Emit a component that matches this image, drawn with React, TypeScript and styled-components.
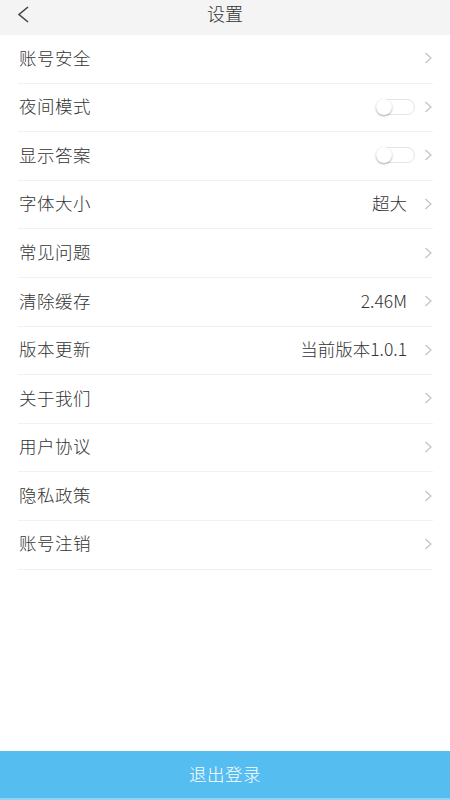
import React from "react";
import styled, { createGlobalStyle } from "styled-components";

const Global = createGlobalStyle`
  html, body { margin: 0; padding: 0; background: #fff; }
  body { font-family: "Noto Sans CJK SC", "Noto Sans", sans-serif; }
  #root { height: 800px; }
`;

const Page = styled.div`
  width: 450px;
  height: 800px;
  display: flex;
  flex-direction: column;
  background: #fff;
`;

const Header = styled.div`
  height: 35px;
  flex: none;
  background: #f4f4f4;
  display: grid;
  grid-template-columns: 60px 1fr 60px;
  align-items: center;
`;

const BackBtn = styled.div`
  padding-left: 17px;
  display: flex;
  align-items: center;
  height: 35px;
  padding-bottom: 6px;
  box-sizing: border-box;
`;

const Title = styled.div`
  text-align: center;
  font-size: 18px;
  font-weight: 300;
  color: #333;
  line-height: 1;
  margin-top: -10px;
`;

const List = styled.div`
  flex: 1;
  padding: 0 17px 0 18px;
`;

const Row = styled.div`
  height: 48.6px;
  box-sizing: border-box;
  border-bottom: 1px solid #f1f1f1;
  display: flex;
  align-items: center;
  padding-bottom: 3px;
`;

const Label = styled.div`
  flex: 1;
  font-size: 17.5px;
  font-weight: 300;
  color: #333;
  padding-left: 1px;
  line-height: 1;
  letter-spacing: 0.5px;
`;

const Value = styled.div`
  font-size: 17.5px;
  font-weight: 300;
  color: #333;
  line-height: 1;
  margin-right: 17px;
`;

const Toggle = styled.div`
  width: 39px;
  height: 16px;
  border: 1px solid #e4e4e4;
  border-radius: 9px;
  box-sizing: border-box;
  position: relative;
  margin-right: 9px;
  margin-top: 2px;
  background: #fff;
`;

const Knob = styled.div`
  position: absolute;
  left: -1px;
  top: -1px;
  width: 16px;
  height: 16px;
  border-radius: 50%;
  background: #fff;
  box-shadow: 0 1px 2px rgba(0, 0, 0, 0.35);
`;

const ChevronBox = styled.span`
  display: flex;
  flex: none;
  margin-top: 2px;
`;

const Button = styled.div`
  flex: none;
  height: 49px;
  background: #55bdf0;
  color: #fff;
  font-size: 17.5px;
  font-weight: 300;
  display: flex;
  align-items: center;
  justify-content: center;
  padding-bottom: 2px;
  box-sizing: border-box;
  border-bottom: 2px solid #8fd3f5;
  letter-spacing: 0.5px;
`;

const Chevron = () => (
  <ChevronBox>
    <svg width="9" height="12" viewBox="0 0 9 12">
      <path d="M1.5 1 L7 6 L1.5 11" fill="none" stroke="#c2c2c2" strokeWidth="1.2" />
    </svg>
  </ChevronBox>
);

const BackArrow = () => (
  <svg width="13" height="17" viewBox="0 0 13 17">
    <path d="M11 1 L2 8.5 L11 16" fill="none" stroke="#444" strokeWidth="1.6" />
  </svg>
);

type Item = { label: string; value?: string; toggle?: boolean };

const items: Item[] = [
  { label: "账号安全" },
  { label: "夜间模式", toggle: true },
  { label: "显示答案", toggle: true },
  { label: "字体大小", value: "超大" },
  { label: "常见问题" },
  { label: "清除缓存", value: "2.46M" },
  { label: "版本更新", value: "当前版本1.0.1" },
  { label: "关于我们" },
  { label: "用户协议" },
  { label: "隐私政策" },
  { label: "账号注销" },
];

export default function App() {
  return (
    <Page>
      <Global />
      <Header>
        <BackBtn>
          <BackArrow />
        </BackBtn>
        <Title>设置</Title>
        <div />
      </Header>
      <List>
        {items.map((it) => (
          <Row key={it.label}>
            <Label>{it.label}</Label>
            {it.value && <Value>{it.value}</Value>}
            {it.toggle && (
              <Toggle>
                <Knob />
              </Toggle>
            )}
            <Chevron />
          </Row>
        ))}
      </List>
      <Button>退出登录</Button>
    </Page>
  );
}
